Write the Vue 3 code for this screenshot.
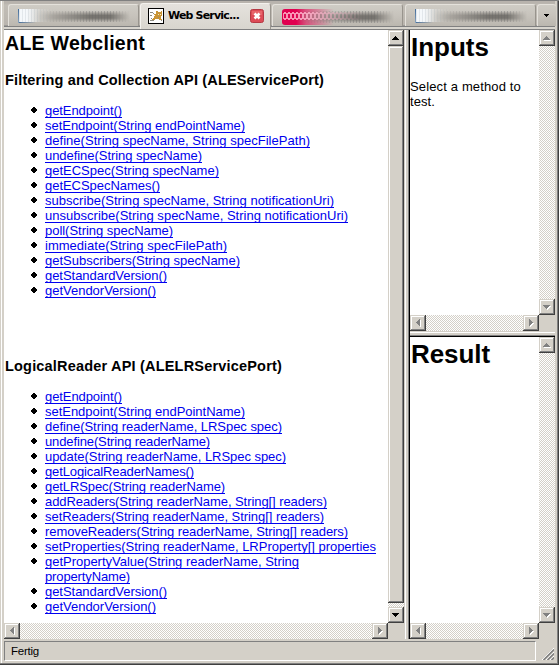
<script setup>
const vFit = {
  mounted(el, { value }) {
    if (!value) return
    const range = document.createRange()
    range.selectNodeContents(el)
    const natural = range.getBoundingClientRect().width
    el.style.letterSpacing = (value - natural) / el.textContent.length + 'px'
  }
}
const filtering = [
  [['getEndpoint()', 77]],
  [['setEndpoint(String endPointName)', 200]],
  [['define(String specName, String specFilePath)', 265]],
  [['undefine(String specName)', 157]],
  [['getECSpec(String specName)', 174]],
  [['getECSpecNames()', 115]],
  [['subscribe(String specName, String notificationUri)', 289]],
  [['unsubscribe(String specName, String notificationUri)', 303]],
  [['poll(String specName)', 128]],
  [['immediate(String specFilePath)', 182]],
  [['getSubscribers(String specName)', 195]],
  [['getStandardVersion()', 122]],
  [['getVendorVersion()', 111]]
]
const reader = [
  [['getEndpoint()', 77]],
  [['setEndpoint(String endPointName)', 200]],
  [['define(String readerName, LRSpec spec)', 237]],
  [['undefine(String readerName)', 165]],
  [['update(String readerName, LRSpec spec)', 241]],
  [['getLogicalReaderNames()', 149]],
  [['getLRSpec(String readerName)', 180]],
  [['addReaders(String readerName, String[] readers)', 282]],
  [['setReaders(String readerName, String[] readers)', 279]],
  [['removeReaders(String readerName, String[] readers)', 303]],
  [['setProperties(String readerName, LRProperty[] properties', 331]],
  [['getPropertyValue(String readerName, String', 254], ['propertyName)', 85]],
  [['getStandardVersion()', 122]],
  [['getVendorVersion()', 111]]
]
const sections = [
  { title: 'Filtering and Collection API (ALEServicePort)', width: 319, items: filtering },
  { title: 'LogicalReader API (ALELRServicePort)', width: 277, items: reader }
]
const right = [
  { title: 'Inputs', width: 78, text: [['Select a method to', 111], ['test.', 25]] },
  { title: 'Result', width: 79, text: [] }
]
</script>

<template>
  <div class="window">
    <div class="tabs">
      <div class="tab t1"><i class="smear blue"></i></div>
      <div class="tab active">
        <svg class="cat" width="16" height="16" viewBox="0 0 16 16" shape-rendering="crispEdges">
          <path fill="#fff" stroke="#000" d="M.5.5h15v15H.5z" />
          <path fill="#c99435" d="M8 5V3h1l1 1h2l1-1h1v4l-1 2v2h1v1h-3l-1-1H8l-2 1H4v-1l2-2 1-2H6V6h2z" />
          <path fill="#8d8b80" d="M2 4h3v1H2zM5 5h1v1H5zM2 7h2v1H2zM2 12h4v1H2zM3 10h1v1H3zM13 12h1v1h-1zM10 9h1v1h-1z" />
          <path fill="#f4e6bd" d="M10 6h1v1h-1zM12 6h1v1h-1z" />
        </svg>
        <b v-fit="71">Web Servic...</b>
        <svg class="close" width="14" height="14" viewBox="0 0 14 14">
          <rect x=".5" y=".5" width="13" height="13" rx="2" fill="#dd4b56" stroke="#b43a44" />
          <path d="M2 2h10v4H2z" fill="#ee7778" opacity=".6" />
          <path d="M4.5 4.5l5 5m0-5l-5 5" stroke="#fff" stroke-width="2.6" />
        </svg>
      </div>
      <div class="tab t3"><i class="smear red"></i></div>
      <div class="tab t4"><i class="smear blue"></i></div>
      <div class="tab drop"><svg width="5" height="3" shape-rendering="crispEdges"><path d="M0 0h5v1H4v1H3v1H2V2H1V1H0z" /></svg></div>
    </div>

    <div class="frames">
      <div class="pane left">
        <div class="doc">
          <h2><span v-fit="140">ALE Webclient</span></h2>
          <section v-for="s in sections" :key="s.title">
            <h3><span v-fit="s.width">{{ s.title }}</span></h3>
            <ul>
              <li v-for="item in s.items" :key="item[0][0]">
                <svg class="dot" width="6" height="6" shape-rendering="crispEdges"><path d="M2 0h2v1h1v1h1v2H5v1H4v1H2V5H1V4H0V2h1V1h1z" /></svg>
                <div v-for="line in item" :key="line[0]" class="line"><a v-fit="line[1]">{{ line[0] }}</a></div>
              </li>
            </ul>
          </section>
        </div>
        <div class="vbar">
          <div class="btn"><svg width="7" height="4" shape-rendering="crispEdges"><path d="M3 0h1v1h1v1h1v1h1v1H0V3h1V2h1V1h1z" /></svg></div>
          <div class="thumb"></div>
          <div class="gap"></div>
          <div class="btn"><svg width="7" height="4" shape-rendering="crispEdges"><path d="M0 0h7v1H6v1H5v1H4v1H3V3H2V2H1V1H0z" /></svg></div>
        </div>
        <div class="hbar">
          <div class="btn off"><svg width="4" height="7" shape-rendering="crispEdges"><path d="M3 0h1v7H3V6H2V5H1V4H0V3h1V2h1V1h1z" /></svg></div>
          <div class="btn off"><svg width="4" height="7" shape-rendering="crispEdges"><path d="M0 0h1v1h1v1h1v1h1v1H3v1H2v1H1v1H0z" /></svg></div>
        </div>
        <div class="corner"></div>
      </div>
      <div class="split"></div>
      <div class="column">
        <div v-for="(p, i) in right" :key="p.title" class="pane small" :class="{ lower: i === 1 }">
          <div class="doc">
            <h1><span v-fit="p.width">{{ p.title }}</span></h1>
            <div v-for="t in p.text" :key="t[0]" class="line"><span v-fit="t[1]">{{ t[0] }}</span></div>
          </div>
          <div class="vbar">
            <div class="btn off"><svg width="7" height="4" shape-rendering="crispEdges"><path d="M3 0h1v1h1v1h1v1h1v1H0V3h1V2h1V1h1z" /></svg></div>
            <div class="btn off"><svg width="7" height="4" shape-rendering="crispEdges"><path d="M0 0h7v1H6v1H5v1H4v1H3V3H2V2H1V1H0z" /></svg></div>
          </div>
          <div class="hbar">
            <div class="btn off"><svg width="4" height="7" shape-rendering="crispEdges"><path d="M3 0h1v7H3V6H2V5H1V4H0V3h1V2h1V1h1z" /></svg></div>
            <div class="btn off"><svg width="4" height="7" shape-rendering="crispEdges"><path d="M0 0h1v1h1v1h1v1h1v1H3v1H2v1H1v1H0z" /></svg></div>
          </div>
          <div class="corner"></div>
        </div>
      </div>
    </div>

    <div class="status">
      <div class="message"><span v-fit="28">Fertig</span></div>
      <svg class="grip" width="12" height="12"><path d="M0 12L12 0M4 12l8-8M8 12l4-4" stroke="#fff" /><path d="M1.5 12L12 1.5M5.5 12L12 5.5M9.5 12L12 9.5" stroke="#808080" stroke-width="1.6" /></svg>
    </div>
  </div>
</template>

<style>
body { margin: 0; overflow: hidden; }
</style>

<style scoped>
* { box-sizing: border-box; }
svg { display: block; flex: none; }
.window {
  width: 559px; height: 665px; padding: 0 4px; background: #d4d0c8;
  display: flex; flex-direction: column; font-family: "Liberation Sans", Arial, sans-serif;
  box-shadow: inset 0 1px #808080, inset -1px -1px #404040, inset -2px -2px #808080, inset 1px 0 #d4d0c8, inset 2px 0 #fff;
}
.tabs {
  height: 30px; flex: none; display: flex; padding: 4px 0 0 4px;
  background: linear-gradient(#808080 0 1px, #b8b3ad 1px 3px, #c1bdb6 5px, #bab5ae 25px, #808080 26px 27px, #d8d5ce 27px 29px, #808080 29px);
}
.tab {
  height: 22px; width: 131px; border: 1px solid #e4e1db; border-right-color: #98948d; border-bottom: 0;
  border-radius: 3px 3px 0 0; background: linear-gradient(#cfccc5, #c7c3bc 50%, #bbb7af); flex: none;
}
.t1 { margin-right: 1px; }
.active {
  height: 26px; width: 131px; margin-top: -1px; background: linear-gradient(#e5e2dd, #d8d5ce);
  border-color: #f3f1ed; border-right-color: #99958e; display: flex; padding: 4px 0 0 7px;
}
.active b { font: bold 11px/16px "DejaVu Sans", sans-serif; margin-left: 4px; width: 71px; white-space: nowrap; }
.close { margin: 1px 0 0 11px; }
.t3 { margin-left: 1px; }
.t4 { margin-left: 2px; }
.drop { width: 19px; margin-left: 1px; padding: 9px 0 0 6px; border-right: 0; }
.smear { display: block; width: 116px; height: 15px; margin: 4px 0 0 9px; position: relative; }
.smear::before, .smear::after { content: ""; position: absolute; }
.smear::before {
  inset: 2px 4px 2px 14px; filter: blur(.6px);
  background: repeating-linear-gradient(90deg, #66666655 0 1px, transparent 1px 3px), linear-gradient(transparent, #77746f 40%, #77746f 65%, transparent);
  -webkit-mask-image: linear-gradient(90deg, transparent, #000 60%, #000 80%, transparent);
  mask-image: linear-gradient(90deg, transparent, #000 60%, #000 80%, transparent);
}
.blue::after {
  left: 1px; top: 0; width: 38px; height: 13px;
  background: repeating-linear-gradient(90deg, #99a4ad33 0 1px, transparent 1px 3px), linear-gradient(90deg, #f5f8fb 8px, #e2e2df99 20px, transparent 38px);
  -webkit-mask-image: linear-gradient(90deg, #000 40%, transparent); mask-image: linear-gradient(90deg, #000 40%, transparent);
}
.blue { background: linear-gradient(#426b99, #8ba4bd) 0 0 / 1px 14px no-repeat, linear-gradient(90deg, #426b99, #426b9900) 0 13px / 18px 1px no-repeat; }
.red::after {
  left: 1px; top: 3px; width: 80px; height: 8px; filter: blur(.3px);
  background: repeating-radial-gradient(ellipse 2px 4px at 50% 50%, #e0005000 0 1px, #ffb7cdcc 1px 2px, #e0005000 2px) 0 0 / 4px 8px;
  -webkit-mask-image: linear-gradient(90deg, #000 30%, transparent); mask-image: linear-gradient(90deg, #000 30%, transparent);
}
.red { background: linear-gradient(90deg, #e00050 14px, #dd386fcc 24px, transparent 52px); border-radius: 3px; height: 16px; }

.frames { height: 609px; flex: none; display: flex; }
.pane { display: grid; grid-template-columns: 1fr 16px; grid-template-rows: 1fr 16px; background: #fff; }
.left { width: 400px; }
.split { width: 6px; background: linear-gradient(90deg, #d4d0c8 1px, #fff 1px 2px, #d4d0c8 2px 4px, #808080 4px 5px, #000 5px); }
.column { flex: 1; display: flex; flex-direction: column; }
.small { height: 301px; }
.lower { height: 308px; border-top: 6px solid transparent; background: linear-gradient(#d4d0c8 1px, #fff 1px 2px, #d4d0c8 2px 4px, #808080 4px 5px, #000 5px 6px, #fff 6px) border-box; }
.doc { overflow: hidden; min-width: 0; min-height: 0; white-space: nowrap; }
.left .doc { padding-left: 1px; }
h1, h2, h3 { margin: 0; font-weight: bold; color: #000; }
h2 { font-size: 19.5px; line-height: 24px; padding-top: 1px; height: 41px; }
h3 { font-size: 14.5px; line-height: 18px; height: 32px; }
section + section { margin-top: 59px; }
h1 { font-size: 26px; line-height: 30px; padding: 2px 0 0 1px; height: 49px; }
ul { list-style: none; margin: 0; padding: 0 0 0 40px; }
li { position: relative; }
.line { height: 15px; font-size: 13px; line-height: 15px; }
a { color: #0000ee; text-decoration: underline; text-decoration-thickness: 1px; text-underline-offset: 2px; text-decoration-skip-ink: none; }
.dot { position: absolute; left: -14px; top: 4px; }
.vbar, .hbar { background: repeating-conic-gradient(#d4d0c8 0 25%, #fff 0 50%) 0 0 / 2px 2px; display: flex; justify-content: space-between; }
.vbar { flex-direction: column; }
.btn, .thumb {
  background: #d4d0c8; box-shadow: inset -1px -1px #404040, inset 1px 1px #d4d0c8, inset -2px -2px #808080, inset 2px 2px #fff;
}
.btn { width: 16px; height: 16px; display: flex; align-items: center; justify-content: center; flex: none; padding: 0 1px 1px 0; }
.off svg { fill: #808080; filter: drop-shadow(1px 1px 0 #fff); overflow: visible; }
.thumb { flex: 1; }
.gap { height: 4px; }
.corner { background: #d4d0c8; }
.status { height: 26px; padding-top: 2px; display: flex; }
.message { width: 532px; height: 20px; border: 1px solid #808080; border-right-color: #fff; border-bottom-color: #fff; padding: 2px 0 0 6px; font-size: 11.5px; line-height: 15px; }
.grip { margin: 7px 0 0 6px; }
</style>
